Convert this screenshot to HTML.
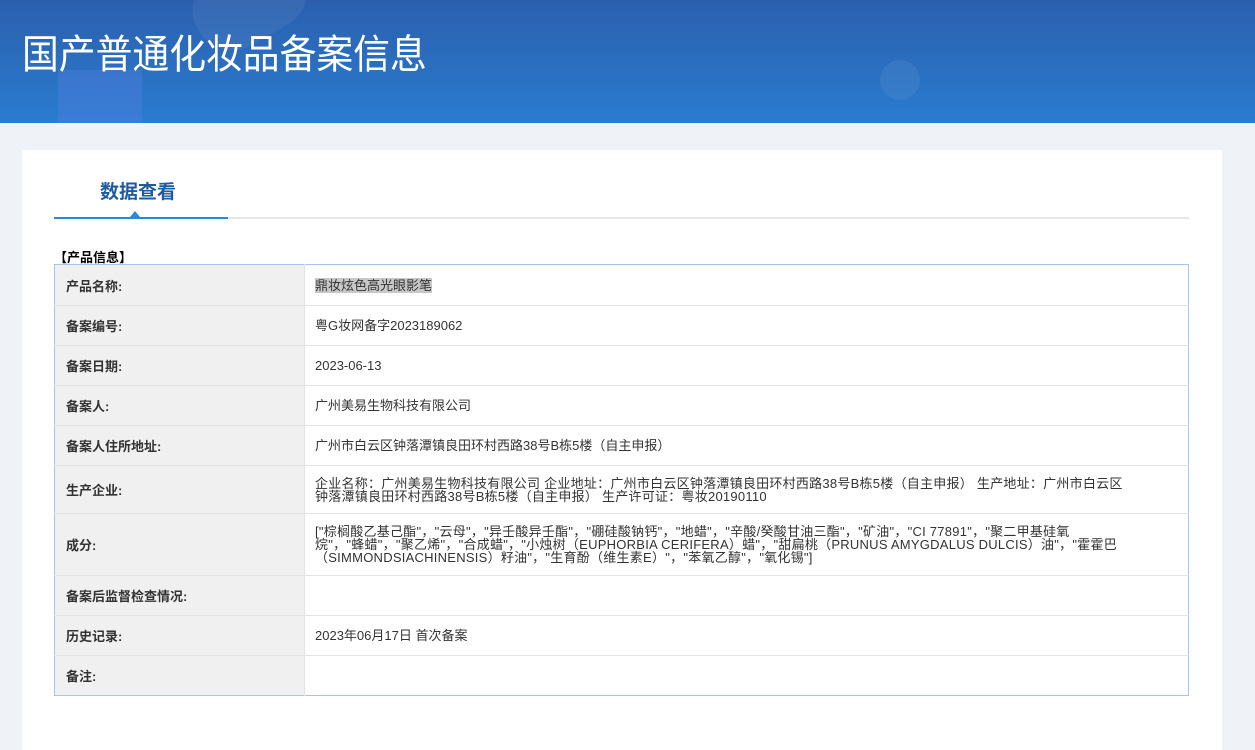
<!DOCTYPE html>
<html><head><meta charset="utf-8"><style>
*{margin:0;padding:0;box-sizing:border-box}
body{width:1255px;height:708px;overflow:hidden;background:#eff3f7;font-family:"Liberation Sans","Noto Sans CJK SC",sans-serif;color:#333}
.hdr{position:absolute;left:0;top:0;width:1255px;height:123px;background:linear-gradient(180deg,#2c5fae 0%,#2a7ccf 100%);overflow:hidden}
.hdr .b1{position:absolute;left:190px;top:-40px;width:120px;height:80px;border-radius:40px;background:rgba(255,255,255,.06);transform:rotate(-30deg)}
.hdr .b2{position:absolute;left:58px;top:70px;width:84px;height:60px;background:rgba(90,130,230,.35)}
.hdr .b3{position:absolute;left:880px;top:60px;width:40px;height:40px;border-radius:50%;background:rgba(255,255,255,.06)}
.hdr h1{position:absolute;left:22px;top:22px;font-size:40px;font-weight:400;color:#fff;white-space:nowrap;transform:scaleX(.92);transform-origin:left}
.card{position:absolute;left:22px;top:150px;width:1200px;height:600px;background:#fff}
.tab{position:absolute;left:100px;top:177px;font-size:19px;font-weight:bold;color:#1e5a9e}
.ln{position:absolute;left:54px;top:217px;width:1135px;height:2px;background:#e6e6e6}
.ln2{position:absolute;left:54px;top:217px;width:174px;height:2px;background:#2a88d8}
.tri{position:absolute;left:130px;top:211px;width:0;height:0;border-left:5px solid transparent;border-right:5px solid transparent;border-bottom:6px solid #2a88d8}
.sec{position:absolute;left:54px;top:247px;font-size:13px;font-weight:bold;color:#000}
table{position:absolute;left:54px;top:264px;width:1135px;border-collapse:collapse;border:1px solid #a8c4ee;font-size:13px}
td{border-bottom:1px solid #e3e3e3;vertical-align:middle}
td.l{width:250px;background:#f0f0f0;font-weight:bold;padding-left:11px;border-right:1px solid #e3e3e3;color:#333}
td.v{padding-left:10px;padding-right:40px;line-height:13px;color:#333}
td.w{letter-spacing:0.25px;white-space:nowrap}
tr:last-child td{border-bottom:none}
.sel{background:#c8c8c8}
</style></head><body>
<div class="hdr"><div class="b1"></div><div class="b2"></div><div class="b3"></div><h1>国产普通化妆品备案信息</h1></div>
<div class="card"></div>
<div class="tab">数据查看</div>
<div class="ln"></div><div class="ln2"></div><div class="tri"></div>
<div class="sec">【产品信息】</div>
<table>
<tr style="height:41px"><td class="l">产品名称:</td><td class="v"><span class="sel">鼎妆炫色高光眼影笔</span></td></tr>
<tr style="height:40px"><td class="l">备案编号:</td><td class="v">粤G妆网备字2023189062</td></tr>
<tr style="height:40px"><td class="l">备案日期:</td><td class="v">2023-06-13</td></tr>
<tr style="height:40px"><td class="l">备案人:</td><td class="v">广州美易生物科技有限公司</td></tr>
<tr style="height:40px"><td class="l">备案人住所地址:</td><td class="v">广州市白云区钟落潭镇良田环村西路38号B栋5楼（自主申报）</td></tr>
<tr style="height:48px"><td class="l">生产企业:</td><td class="v w">企业名称：广州美易生物科技有限公司 企业地址：广州市白云区钟落潭镇良田环村西路38号B栋5楼（自主申报） 生产地址：广州市白云区<br>钟落潭镇良田环村西路38号B栋5楼（自主申报） 生产许可证：粤妆20190110</td></tr>
<tr style="height:62px"><td class="l">成分:</td><td class="v w">["棕榈酸乙基己酯"，"云母"，"异壬酸异壬酯"，"硼硅酸钠钙"，"地蜡"，"辛酸/癸酸甘油三酯"，"矿油"，"CI 77891"，"聚二甲基硅氧<br>烷"，"蜂蜡"，"聚乙烯"，"合成蜡"，"小烛树（EUPHORBIA CERIFERA）蜡"，"甜扁桃（PRUNUS AMYGDALUS DULCIS）油"，"霍霍巴<br>（SIMMONDSIACHINENSIS）籽油"，"生育酚（维生素E）"，"苯氧乙醇"，"氧化锡"]</td></tr>
<tr style="height:40px"><td class="l">备案后监督检查情况:</td><td class="v"></td></tr>
<tr style="height:40px"><td class="l">历史记录:</td><td class="v">2023年06月17日 首次备案</td></tr>
<tr style="height:40px"><td class="l">备注:</td><td class="v"></td></tr>
</table>
</body></html>
